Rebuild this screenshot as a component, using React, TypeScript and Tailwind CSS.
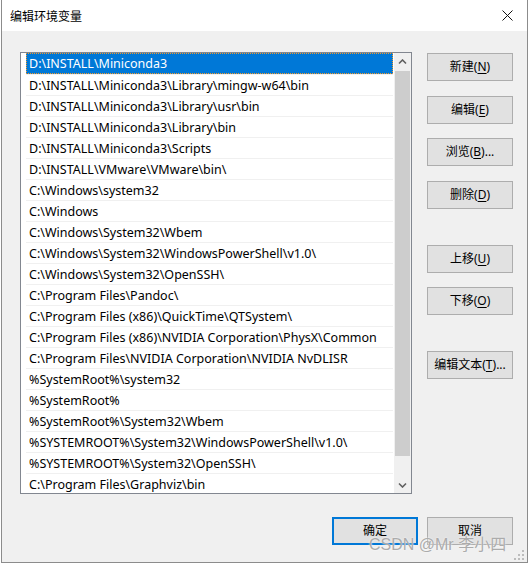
import clsx from "clsx";

const paths = [
  "D:\\INSTALL\\Miniconda3",
  "D:\\INSTALL\\Miniconda3\\Library\\mingw-w64\\bin",
  "D:\\INSTALL\\Miniconda3\\Library\\usr\\bin",
  "D:\\INSTALL\\Miniconda3\\Library\\bin",
  "D:\\INSTALL\\Miniconda3\\Scripts",
  "D:\\INSTALL\\VMware\\VMware\\bin\\",
  "C:\\Windows\\system32",
  "C:\\Windows",
  "C:\\Windows\\System32\\Wbem",
  "C:\\Windows\\System32\\WindowsPowerShell\\v1.0\\",
  "C:\\Windows\\System32\\OpenSSH\\",
  "C:\\Program Files\\Pandoc\\",
  "C:\\Program Files (x86)\\QuickTime\\QTSystem\\",
  "C:\\Program Files (x86)\\NVIDIA Corporation\\PhysX\\Common",
  "C:\\Program Files\\NVIDIA Corporation\\NVIDIA NvDLISR",
  "%SystemRoot%\\system32",
  "%SystemRoot%",
  "%SystemRoot%\\System32\\Wbem",
  "%SYSTEMROOT%\\System32\\WindowsPowerShell\\v1.0\\",
  "%SYSTEMROOT%\\System32\\OpenSSH\\",
  "C:\\Program Files\\Graphviz\\bin",
];

type BtnProps = {
  label: string;
  hot: string;
  tail?: string;
  className?: string;
};

function Btn({ label, hot, tail, className }: BtnProps) {
  return (
    <div
      className={clsx(
        "w-[86px] h-[28px] border border-[#adadad] bg-[#e1e1e1] flex items-center justify-center text-[12px] text-black",
        className
      )}
    >
      {label}(<span className="underline underline-offset-2">{hot}</span>)
      {tail}
    </div>
  );
}

function Chevron({ down }: { down?: boolean }) {
  return (
    <svg width="9" height="6" viewBox="0 0 9 6">
      <path
        d={down ? "M1 1.5 L4.5 5 L8 1.5" : "M1 4.5 L4.5 1 L8 4.5"}
        fill="none"
        stroke="#606060"
        strokeWidth="1.6"
      />
    </svg>
  );
}

export default function App() {
  return (
    <div className="relative w-[529px] h-[563px] bg-white pl-px font-['Noto_Sans','Noto_Sans_CJK_SC',sans-serif]">
      <div className="w-[527px] h-[563px] flex flex-col border-x border-b border-[#8c8c8c]">
        {/* title bar */}
        <div className="h-[31px] bg-white flex items-center justify-between pl-[8px] pr-[14px]">
          <span className="text-[12px] text-black font-['Noto_Sans_CJK_SC',sans-serif]">
            编辑环境变量
          </span>
          <svg width="11" height="11" viewBox="0 0 11 11">
            <path d="M0.5 0.5 L10.5 10.5 M10.5 0.5 L0.5 10.5" stroke="#111" strokeWidth="1" />
          </svg>
        </div>

        {/* dialog body */}
        <div className="relative flex-1 bg-[#f0f0f0]">
          <div className="flex">
            {/* path list */}
            <div className="ml-[18px] mt-[21px] w-[392px] h-[442px] border border-[#828790] bg-white flex">
              <div className="w-[373px] h-[440px] overflow-hidden pl-[5px] pr-px">
                {paths.map((p, i) => (
                  <div
                    key={p}
                    className={clsx(
                      "h-[21px] flex items-center pl-[3px] pt-[2px] text-[12.5px] whitespace-nowrap",
                      i === 0
                        ? "bg-[#0078d7] text-white outline outline-1 outline-dotted outline-[#f39a2b] -outline-offset-1"
                        : "text-black border-t border-[#f0f0f0]"
                    )}
                  >
                    {p}
                  </div>
                ))}
              </div>
              {/* scrollbar */}
              <div className="w-[17px] h-[440px] bg-[#f0f0f0] flex flex-col">
                <div className="h-[17px] flex items-center justify-center">
                  <Chevron />
                </div>
                <div className="mx-px mt-px h-[385px] bg-[#cdcdcd]" />
                <div className="mt-auto h-[17px] flex items-center justify-center">
                  <Chevron down />
                </div>
              </div>
            </div>

            {/* action buttons */}
            <div className="ml-[15px] mt-[22px] flex flex-col">
              <Btn label="新建" hot="N" />
              <Btn label="编辑" hot="E" className="mt-[15px]" />
              <Btn label="浏览" hot="B" tail="..." className="mt-[14px]" />
              <Btn label="删除" hot="D" className="mt-[15px]" />
              <Btn label="上移" hot="U" className="mt-[36px]" />
              <Btn label="下移" hot="O" className="mt-[14px]" />
              <Btn label="编辑文本" hot="T" tail="..." className="mt-[36px]" />
            </div>
          </div>

          {/* OK / Cancel */}
          <div className="mt-[23px] flex justify-end gap-[9px] pr-[14px]">
            <div className="w-[86px] h-[28px] border-2 border-[#0078d7] bg-[#e1e1e1] flex items-center justify-center text-[12px] text-black">
              确定
            </div>
            <div className="w-[86px] h-[28px] border border-[#adadad] bg-[#e1e1e1] flex items-center justify-center text-[12px] text-black">
              取消
            </div>
          </div>

          {/* size grip */}
          <svg className="absolute right-[2px] bottom-[1px]" width="11" height="11" viewBox="0 0 11 11">
            {[
              [8, 0],
              [4, 4],
              [8, 4],
              [0, 8],
              [4, 8],
              [8, 8],
            ].map(([x, y]) => (
              <rect key={`${x}-${y}`} x={x} y={y} width="2" height="2" fill="#bcbcbc" />
            ))}
          </svg>
        </div>
      </div>

      {/* watermark */}
      <div className="absolute left-[369px] top-[533px] text-[16px] text-[#ababab] [text-shadow:0_0_2px_#fff] font-['Liberation_Sans','Noto_Sans_CJK_SC',sans-serif]">
        CSDN @Mr 李小四
      </div>
    </div>
  );
}
